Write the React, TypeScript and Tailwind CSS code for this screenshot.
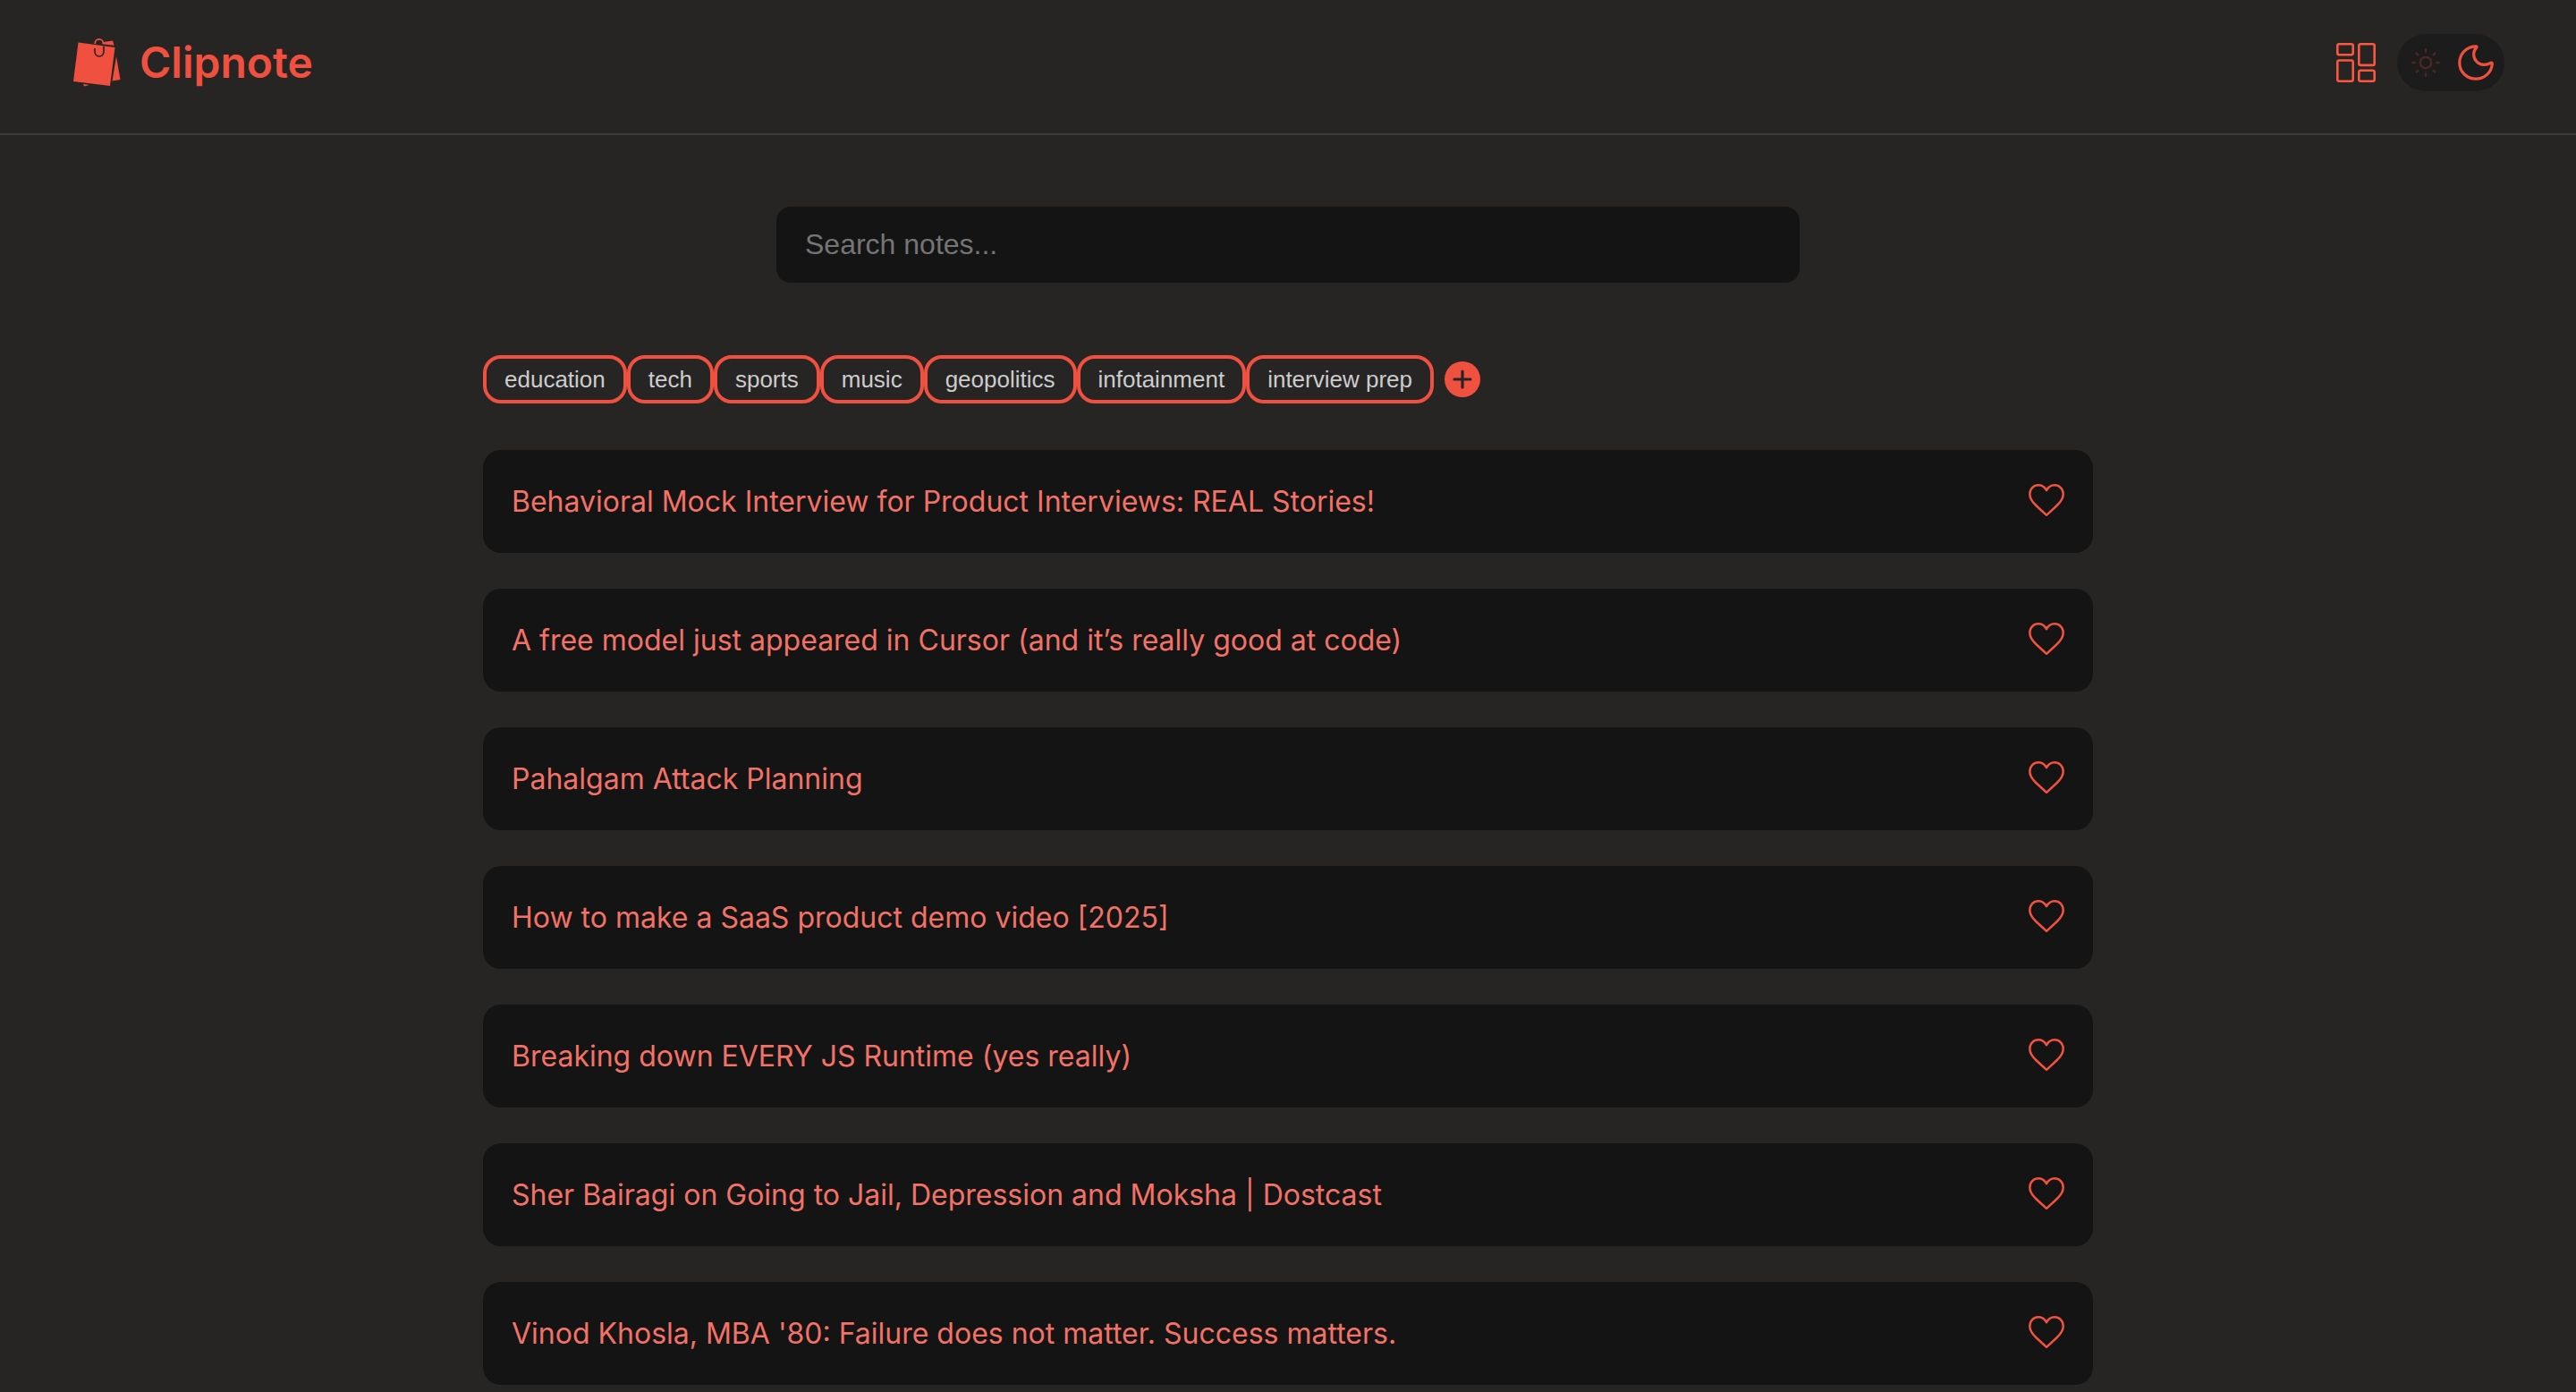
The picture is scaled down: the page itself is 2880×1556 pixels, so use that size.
import React from "react";

const tags = ["education", "tech", "sports", "music", "geopolitics", "infotainment", "interview prep"];

const notes = [
  "Behavioral Mock Interview for Product Interviews: REAL Stories!",
  "A free model just appeared in Cursor (and it’s really good at code)",
  "Pahalgam Attack Planning",
  "How to make a SaaS product demo video [2025]",
  "Breaking down EVERY JS Runtime (yes really)",
  "Sher Bairagi on Going to Jail, Depression and Moksha | Dostcast",
  "Vinod Khosla, MBA '80: Failure does not matter. Success matters.",
];

function Logo() {
  return (
    <svg viewBox="0 0 54 54" className="size-[54px]" fill="#ef503f" aria-hidden="true">
      <path d="M5.5 4.5 L46.5 10 L41 53 L0 48 Z" />
      <path d="M34 4 L44 2.5 L45.5 7.8 L32 6.2 Z" />
      <path d="M48 20 L52.5 46 L43.5 47.5 Z" />
      <path d="M11 51 L18 52 L12 53.5 Z" />
      <path d="M24.2 6 V5 a4.6 4.6 0 0 1 9.2 1" fill="none" stroke="#ef503f" strokeWidth="1.8" />
      <path d="M24 11 v4 a5 5 0 0 0 10 0 V8.5" fill="none" stroke="#262524" strokeWidth="1.6" />
    </svg>
  );
}

function DashboardIcon() {
  return (
    <svg viewBox="0 0 44 44" className="size-11" fill="none" stroke="#f9573f" strokeWidth="2.6" aria-hidden="true">
      <rect x="1.3" y="1.3" width="17.4" height="12" rx="2" />
      <rect x="25.3" y="1.3" width="17.4" height="23.6" rx="2" />
      <rect x="1.3" y="19.5" width="17.4" height="23.2" rx="2" />
      <rect x="25.3" y="30.7" width="17.4" height="12" rx="2" />
    </svg>
  );
}

function SunIcon() {
  return (
    <svg viewBox="0 0 32 32" className="size-8" fill="none" stroke="#4b2723" strokeWidth="2.4" strokeLinecap="round" aria-hidden="true">
      <circle cx="16" cy="16" r="6.2" />
      <path d="M16 1.2v2.6M16 28.2v2.6M1.2 16h2.6M28.2 16h2.6M5.6 5.6l1.8 1.8M24.6 24.6l1.8 1.8M5.6 26.4l1.8-1.8M24.6 7.4l1.8-1.8" />
    </svg>
  );
}

function MoonIcon() {
  return (
    <svg viewBox="0 0 40 40" className="size-10" fill="none" stroke="#f0513f" strokeWidth="3.2" strokeLinejoin="round" aria-hidden="true">
      <path d="M20.2 1.8 C10 1.8 1.8 10 1.8 20.2 C1.8 30.3 10 38.2 20 38.2 C29.5 38.2 37.6 31 38.3 21.3 C38.4 20.2 37.6 19.8 36.6 20.3 C34 21.7 31.8 22.3 29.2 22.3 C22.6 22.3 17.6 17 17.6 10.4 C17.6 7.8 18.5 5.6 20.7 3.2 C21.3 2.3 21 1.8 20.2 1.8 Z" />
    </svg>
  );
}

function HeartIcon() {
  return (
    <svg viewBox="0 0 40 40" className="size-10" fill="none" stroke="#f2523f" strokeWidth="2.5" strokeLinejoin="round" aria-hidden="true">
      <path d="M20 7.2 C18 3.4 15 1.3 11 1.3 C5.6 1.3 1.3 5.4 1.3 11.6 C1.3 16.6 3.6 19.6 8.2 24 L20 34.8 L31.8 24 C36.4 19.6 38.7 16.6 38.7 11.6 C38.7 5.4 34.4 1.3 29 1.3 C25 1.3 22 3.4 20 7.2 Z" />
    </svg>
  );
}

export default function App() {
  return (
    <div className="h-screen overflow-hidden bg-[#262524] font-[Inter,sans-serif]">
      <header className="flex items-start justify-between border-b-2 border-[#3a3a39] pt-[38px] pr-20 pb-[47px] pl-[82px]">
        <a href="#" className="flex h-16 items-center gap-5 text-5xl font-semibold text-[#ef503f]">
          <Logo />
          Clipnote
        </a>
        <div className="flex items-center gap-6">
          <button type="button" aria-label="Dashboard">
            <DashboardIcon />
          </button>
          <button type="button" aria-label="Toggle dark mode" className="flex h-16 w-[120px] items-center justify-between rounded-full bg-[#1c1c1c] pr-3 pl-4">
            <SunIcon />
            <MoonIcon />
          </button>
        </div>
      </header>
      <main className="pt-20">
        <input
          type="text"
          aria-label="Search notes"
          placeholder="Search notes..."
          className="mx-auto block h-[85px] w-full max-w-[1144px] rounded-2xl bg-[#141414] px-8 font-['Liberation_Sans',Arial,sans-serif] text-[32px] text-[#cccccc] outline-none placeholder:text-[#757575]"
        />
        <div className="mx-auto max-w-[1800px] pt-[81px]">
          <div className="flex items-center">
            {tags.map((tag) => (
              <button
                key={tag}
                type="button"
                className="h-[54px] rounded-[20px] border-4 border-[#ef503f] px-5 pb-px font-['Liberation_Sans',Arial,sans-serif] text-[26px] leading-8 text-[#cccccc]"
              >
                {tag}
              </button>
            ))}
            <button type="button" aria-label="Add tag" className="ml-3">
              <svg viewBox="0 0 40 40" className="size-10" aria-hidden="true">
                <circle cx="20" cy="20" r="20" fill="#ef503f" />
                <path d="M20 11v18M11 20h18" stroke="#262524" strokeWidth="3.2" strokeLinecap="round" />
              </svg>
            </button>
          </div>
          <ul className="mt-[52px] flex flex-col gap-10">
            {notes.map((note) => (
              <li key={note} className="flex h-[115px] items-center justify-between rounded-[20px] bg-[#141414] px-8">
                <a href="#" className="text-[32px] text-[#f37267]">
                  {note}
                </a>
                <button type="button" aria-label={"Favourite " + note}>
                  <HeartIcon />
                </button>
              </li>
            ))}
          </ul>
        </div>
      </main>
    </div>
  );
}
